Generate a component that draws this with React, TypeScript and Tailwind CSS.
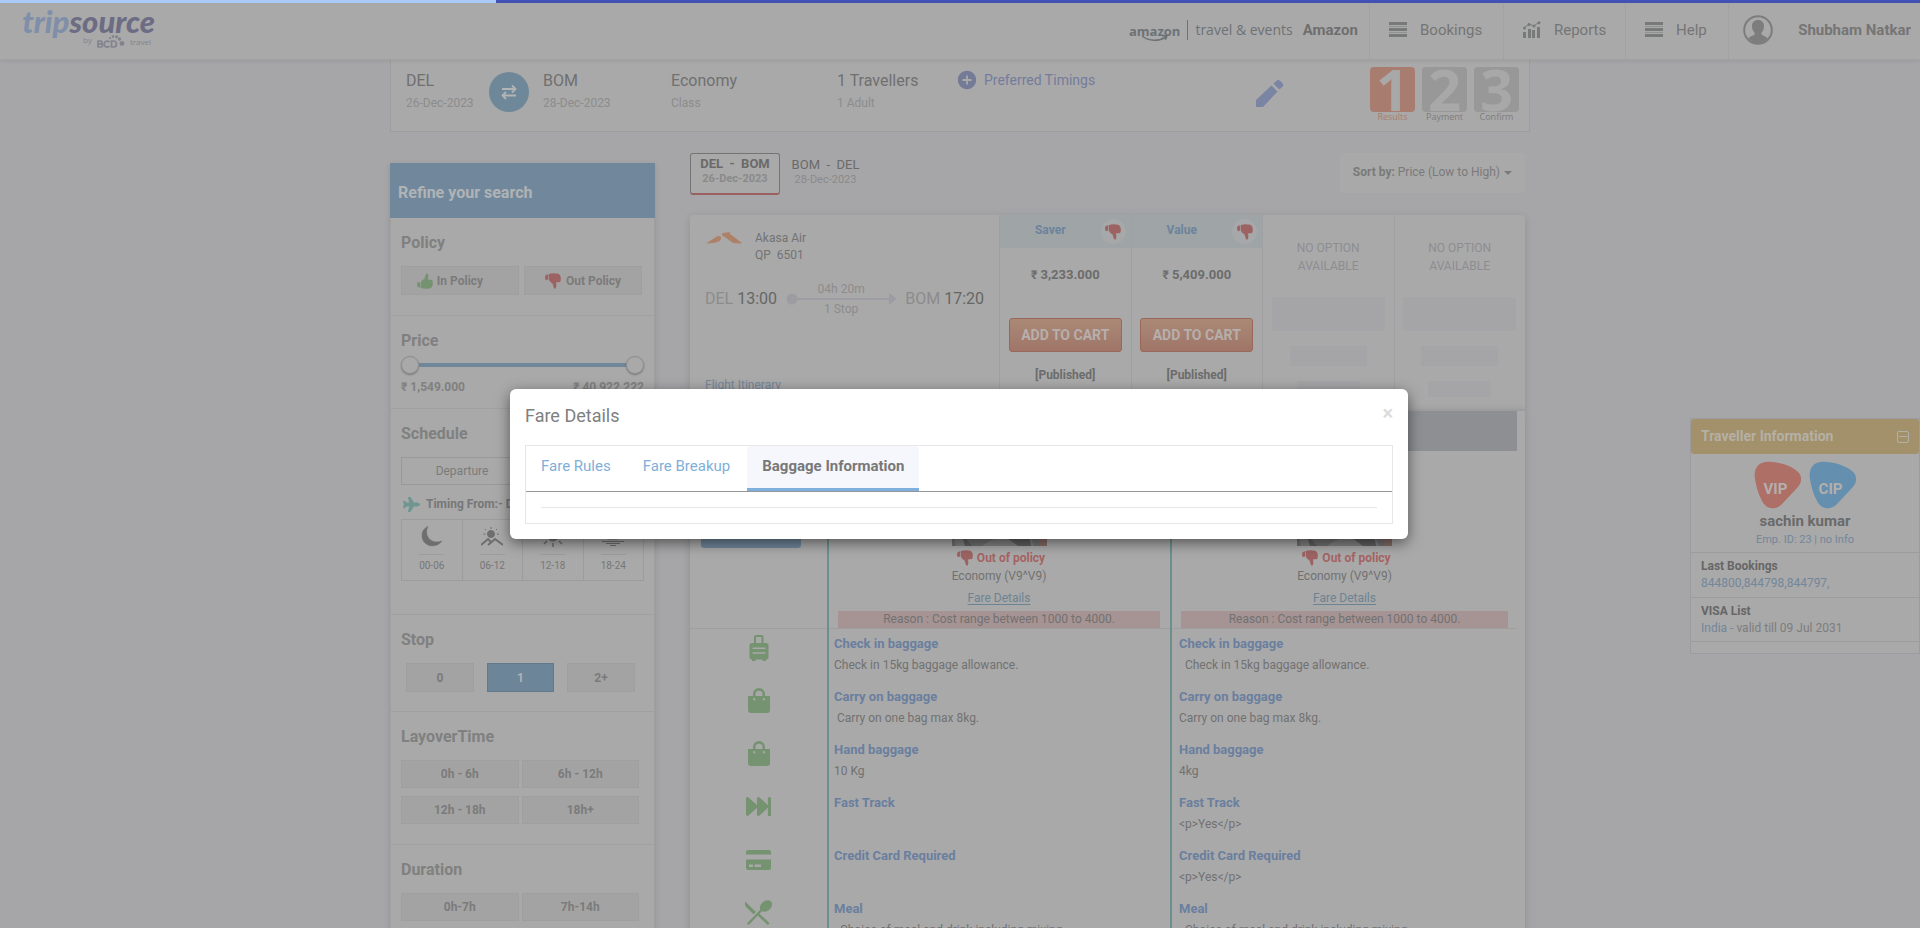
import React from "react";
import { FaPlane, FaFastForward } from "react-icons/fa";
import { MdAddCircle } from "react-icons/md";

const BUTTON_GREY = "flex items-center justify-center border border-[#9f9f9f] bg-[#a3a3a3] text-[12px] font-bold text-[#7b7b7b]";

function Thumb({ className }: { className: string }) {
  return (
    <svg width="16" height="16" viewBox="0 0 16 16" fill="currentColor" className={className} aria-hidden="true">
      <path d="M.2 2.800Q1.300 1.500 3.200 1.300L3 6.400.8 7.200Q-.3 5 .2 2.800z" />
      <path d="M3.800 1Q8.500-.4 13.200.8q2.200.6 2.500 3.400.4 3.600-.6 4.800l-4.200.6q.9 3.200 0 5.600-1.900.8-2.300-1.300L7.400 10.200Q4.800 9.200 3.700 6.600z" />
    </svg>
  );
}

function MenuBars() {
  return (
    <svg width="18" height="16" viewBox="0 0 18 16" fill="#777a79" aria-hidden="true">
      <rect width="18" height="3" />
      <rect y="6" width="18" height="3" />
      <rect y="12" width="18" height="3" />
      <rect y="4" width="18" height="1" opacity=".5" />
      <rect y="10" width="18" height="1" opacity=".5" />
    </svg>
  );
}

function ReportsIcon() {
  return (
    <svg width="18" height="18" viewBox="0 0 18 18" fill="#777a79" aria-hidden="true">
      <rect x="0" y="11" width="3" height="6" />
      <rect x="5" y="8" width="3" height="9" />
      <rect x="9" y="9" width="3" height="8" />
      <rect x="14" y="6" width="3" height="11" />
      <path d="M1 7 6 3l5 2 5-4" stroke="#777a79" fill="none" />
      <circle cx="1.500" cy="7" r="1.500" />
      <circle cx="6" cy="3.500" r="1.500" />
      <circle cx="11" cy="5" r="1.500" />
      <circle cx="16" cy="1.800" r="1.500" />
    </svg>
  );
}

function UserIcon() {
  return (
    <svg width="30" height="30" viewBox="0 0 30 30" aria-hidden="true">
      <circle cx="15" cy="15" r="13.800" fill="none" stroke="#7d7d7d" strokeWidth="2" />
      <path
        d="M15 5c3.800 0 6 2.500 6 6 0 2.500-.8 5-2.500 6.500v2.200c1.800 1.200 4.800 1.800 6.200 3.600A13.500 13.500 0 0 1 15 28.500a13.500 13.500 0 0 1-9.700-5.200c1.400-1.800 4.400-2.400 6.200-3.600v-2.200C9.800 16 9 13.500 9 11c0-3.500 2.200-6 6-6z"
        fill="#7d7d7d"
      />
    </svg>
  );
}

function Header() {
  const links = [
    { label: "Bookings", icon: <MenuBars />, width: "w-[134px]" },
    { label: "Reports", icon: <ReportsIcon />, width: "w-[122px]" },
    { label: "Help", icon: <MenuBars />, width: "w-[103px]" },
  ];
  return (
    <header className="relative z-10 flex h-[60px] shrink-0 flex-col border-b border-[#a2a2a2] bg-[#a9a9a9] shadow-[0_1px_4px_rgba(0,0,0,0.08)]">
      <div className="flex h-[3px] shrink-0 bg-[#4252b4]" role="progressbar" aria-label="Loading">
        <div className="w-[496px] bg-[#aacbf8]" />
      </div>
      <div className="flex flex-1 items-stretch pb-[2px]">
        <a href="#home" className="ml-[23px] flex w-[132px] flex-col items-end">
          <span className="font-['Lato'] text-[31px] leading-[36px] font-black italic">
            <span className="text-[#7f8fa9]">trip</span>
            <span className="text-[#6c6c84]">source</span>
          </span>
          <span className="-mt-1 mr-1 flex items-center gap-1 font-['Open_Sans'] text-[8px] leading-[14px] text-[#83838f]">
            <span className="-mt-1">by</span>
            <svg width="30" height="14" viewBox="0 0 28 14" fill="#83838f" aria-hidden="true">
              <path
                d="M1 6v6h3a1.600 1.600 0 0 0 0-3.200H1h2.600A1.400 1.400 0 0 0 3.600 6zM12.500 7.200A3 3 0 1 0 12.500 11M14.500 6v6h2a3 3 0 0 0 0-6z"
                fill="none"
                stroke="#83838f"
                strokeWidth="1.700"
              />
              <circle cx="13" cy="3" r="1.100" />
              <circle cx="16" cy="1.600" r="1.300" />
              <circle cx="19.500" cy="1.800" r="1.500" />
              <circle cx="22.500" cy="4" r="1.700" />
              <circle cx="25" cy="8.500" r="2.400" />
            </svg>
            <span>travel</span>
          </span>
        </a>
        <div className="ml-auto flex items-center gap-[10px] pr-[11px]">
          <div className="flex items-center gap-[7px] font-['Open_Sans'] text-[#6c7276]">
            <span className="flex flex-col items-center pt-1 text-[13px] leading-4 font-bold">
              amazon
              <svg width="28" height="7" viewBox="0 0 28 7" fill="none" stroke="#6c7276" strokeWidth="1.500" className="-mt-1" aria-hidden="true">
                <path d="M1 1c7 5.500 17 5.500 24 1M21 .8l5-.1-1.500 4" />
              </svg>
            </span>
            <span className="h-5 w-px bg-[#6c7276]" />
            <span className="text-[14px] leading-4">travel &amp; events</span>
          </div>
          <span className="text-[15px] font-bold text-[#6f6f6f]">Amazon</span>
        </div>
        <nav className="-mb-[2px] flex">
          {links.map((l) => (
            <a key={l.label} href="#menu" className={`flex items-center gap-[13px] border-l border-[#a2a2a2] pb-[2px] pl-[19px] text-[15px] text-[#757575] ${l.width}`}>
              {l.icon}
              {l.label}
            </a>
          ))}
          <a href="#user" className="flex w-[192px] items-center justify-between border-l border-[#a2a2a2] pr-[9px] pb-[2px] pl-[14px] text-[15px] font-bold text-[#757575]">
            <UserIcon />
            Shubham Natkar
          </a>
        </nav>
      </div>
    </header>
  );
}

function Leg({ title, sub, className }: { title: string; sub: string; className: string }) {
  return (
    <div className={className}>
      <div className="text-[16px] leading-[22px] text-[#707070]">{title}</div>
      <div className="text-[12px] leading-[22px] text-[#8c8c8c]">{sub}</div>
    </div>
  );
}

function SearchBar() {
  const steps = [
    { n: "1", label: "Results", box: "bg-[#a97c70]", text: "text-[#a97c70]" },
    { n: "2", label: "Payment", box: "bg-[#989898]", text: "text-[#7d7d7d]" },
    { n: "3", label: "Confirm", box: "bg-[#989898]", text: "text-[#7d7d7d]" },
  ];
  return (
    <section className="flex h-[72px] items-start border border-t-0 border-[#9c9c9e] bg-[#a9a9a9] pr-[10px] pl-[15px]">
      <Leg title="DEL" sub="26-Dec-2023" className="w-[83px] pt-[10px]" />
      <button aria-label="Swap" className="mt-3 mr-[14px] flex size-10 shrink-0 items-center justify-center rounded-full bg-[#6e889a]">
        <svg width="16" height="16" viewBox="0 0 16 16" fill="none" stroke="#b2b4b5" strokeWidth="1.800" aria-hidden="true">
          <path d="M1 5h13M11 1.500 14.500 5 11 8.500M15 11.500H2M5 8 1.500 11.500 5 15" />
        </svg>
      </button>
      <Leg title="BOM" sub="28-Dec-2023" className="w-32 pt-[10px]" />
      <Leg title="Economy" sub="Class" className="w-[166px] pt-[10px]" />
      <Leg title="1 Travellers" sub="1 Adult" className="w-[119px] pt-[10px]" />
      <button className="mt-[9px] flex items-center gap-[6px] text-[14px] leading-[22px] text-[#757b9c]">
        <MdAddCircle className="size-[22px] text-[#737b97]" />
        Preferred Timings
      </button>
      <button aria-label="Edit search" className="mt-5 ml-auto">
        <svg width="28" height="28" viewBox="0 0 28 28" fill="#7a84a3" aria-hidden="true">
          <path d="M0 20 15.500 5.500l6 6L7 27H0zM17.500 3.800 20.300 1q2-1.800 4 0l2 2q1.800 2 0 3.800L23.500 9.500z" />
        </svg>
      </button>
      <ol className="ml-[86px] flex gap-[7px] pt-[7px]">
        {steps.map((s) => (
          <li key={s.n} className="w-[45px] text-center">
            <div className={`h-[45px] rounded-sm font-['Open_Sans'] text-[58px] leading-[43px] font-bold text-[#a8a8a8] ${s.box}`}>{s.n}</div>
            <div className={`font-['Open_Sans'] text-[9px] leading-[10px] ${s.text}`}>{s.label}</div>
          </li>
        ))}
      </ol>
    </section>
  );
}

function FilterSection({ title, height, children }: { title: string; height: string; children: React.ReactNode }) {
  return (
    <section className={`border-b border-[#a0a0a0] px-[10px] pt-[13px] ${height}`}>
      <h3 className="mb-[11px] text-[16px] leading-6 font-bold text-[#808080]">{title}</h3>
      {children}
    </section>
  );
}

function ScheduleIcon({ kind }: { kind: number }) {
  return (
    <svg width="22" height="21" viewBox="0 0 22 21" fill="#6e6e6e" stroke="#6e6e6e" aria-hidden="true">
      {kind === 0 && <path d="M7 .5C2.500 9 9.500 19 21 15 15.500 23 1 21 1 9.500 1 5 3.500 2 7 .5z" strokeWidth=".5" />}
      {kind === 1 && (
        <>
          <circle cx="10" cy="8" r="3.500" />
          <path d="M10 1v2M4 3l1 1M16 3l-1 1M2.500 8h2M16 8h2" />
          <path d="M0 19l7-6 4 4M7 19l7-6 8 6" fill="none" strokeWidth="2" />
        </>
      )}
      {kind === 2 && (
        <>
          <circle cx="11" cy="10" r="5" />
          <path d="M11 17v4M5 15l-3 3M17 15l3 3M11 0v3M1 10h3M18 10h3" strokeWidth="1.500" />
        </>
      )}
      {kind === 3 && (
        <>
          <path d="M6 13a5 5 0 0 1 10 0z" />
          <path d="M0 15.500h22M4 17.500h14M8 19.500h6" />
        </>
      )}
    </svg>
  );
}

function Sidebar() {
  return (
    <aside className="mt-[31px] w-[265px] shrink-0 self-start shadow-[0_2px_6px_rgba(0,0,0,0.12)]">
      <h2 className="flex h-[55px] items-center bg-[#71889c] pt-1 pl-2 text-[16px] font-bold text-[#b0b3b6]">Refine your search</h2>
      <div className="border-x border-[#a0a0a0] bg-[#a9a9a9]">
        <FilterSection title="Policy" height="h-[98px]">
          <div className="flex gap-[5px]">
            <button className={`h-[29px] w-[118px] gap-1 pr-5 ${BUTTON_GREY}`}>
              <Thumb className="-scale-y-100 text-[#769371]" />
              In Policy
            </button>
            <button className={`h-[29px] w-[118px] gap-[5px] ${BUTTON_GREY}`}>
              <Thumb className="text-[#9d6363]" />
              Out Policy
            </button>
          </div>
        </FilterSection>
        <FilterSection title="Price" height="h-[93px]">
          <div className="-mt-[8px] flex h-[18px] items-center">
            <button aria-label="Minimum price" className="size-[18px] rounded-full border border-[#8f8f8f] bg-[#a9a9a9] shadow-[0_1px_2px_rgba(0,0,0,0.3)]" />
            <div className="h-1 w-[208px] bg-[#6f8799]" />
            <button aria-label="Maximum price" className="size-[18px] rounded-full border border-[#8f8f8f] bg-[#a9a9a9] shadow-[0_1px_2px_rgba(0,0,0,0.3)]" />
          </div>
          <div className="mt-1 flex justify-between text-[12px] leading-[18px] font-bold text-[#808080]">
            <span>₹ 1,549.000</span>
            <span>₹ 40,922.222</span>
          </div>
        </FilterSection>
        <FilterSection title="Schedule" height="h-[206px]">
          <div className="flex w-[242px] border border-[#999999] text-[12px] leading-[26px] text-[#7b7b7b]">
            <button className="w-1/2">Departure</button>
            <button className="w-1/2">Arrival</button>
          </div>
          <div className="mt-[9px] mb-[5px] flex h-5 items-center gap-[6px] pl-[2px] text-[12px] font-bold text-[#777777]">
            <FaPlane className="size-[17px] text-[#6f9690]" />
            Timing From:- DEL
          </div>
          <div className="grid w-[243px] grid-cols-4 border-y border-r border-[#9c9c9c]">
            {["00-06", "06-12", "12-18", "18-24"].map((t, i) => (
              <button key={t} className="flex h-[60px] flex-col items-center border-l border-[#9c9c9c] pt-[6px]">
                <ScheduleIcon kind={i} />
                <span className="mt-[7px] h-px w-[25px] bg-[#9c9c9c]" />
                <span className="mt-1 text-[10px] leading-[14px] text-[#777777]">{t}</span>
              </button>
            ))}
          </div>
        </FilterSection>
        <FilterSection title="Stop" height="h-[97px]">
          <div className="flex gap-[13px] pl-[5px]">
            <button className={`h-[29px] w-[68px] ${BUTTON_GREY}`}>0</button>
            <button className="h-[29px] w-[67px] border border-[#62788d] bg-[#6d8599] text-[12px] font-bold text-[#b0b3b6]">1</button>
            <button className={`h-[29px] w-[68px] ${BUTTON_GREY}`}>2+</button>
          </div>
        </FilterSection>
        <FilterSection title="LayoverTime" height="h-[133px]">
          <div className="grid w-[238px] grid-cols-2 gap-x-[3px] gap-y-2">
            {["0h - 6h", "6h - 12h", "12h - 18h", "18h+"].map((t) => (
              <button key={t} className={`h-[28px] ${BUTTON_GREY}`}>{t}</button>
            ))}
          </div>
        </FilterSection>
        <FilterSection title="Duration" height="h-[133px]">
          <div className="grid w-[238px] grid-cols-2 gap-x-[3px] gap-y-2">
            {["0h-7h", "7h-14h"].map((t) => (
              <button key={t} className={`h-[28px] ${BUTTON_GREY}`}>{t}</button>
            ))}
          </div>
        </FilterSection>
      </div>
    </aside>
  );
}

function FareColumn({ name, price }: { name: string; price: string }) {
  return (
    <div className="flex flex-col items-center border-l border-[#a0a0a2] text-[#6c6c6c]">
      <div className="flex h-[33px] w-full items-center justify-end bg-[#9fa4a7] pr-[5px]">
        <span className="flex-1 pr-5 pb-1 pl-5 text-center text-[12px] font-bold text-[#6c839c]">{name}</span>
        <span className="flex size-[25px] items-center justify-center rounded-full bg-[#a7a8a9]">
          <Thumb className="text-[#9d6363]" />
        </span>
      </div>
      <div className="mt-[18px] text-[13px] leading-[18px] font-bold">
        <span className="text-[12px]">₹</span> {price}
      </div>
      <button className="mt-[34px] h-[34px] w-[113px] rounded-[3px] border border-[#99685a] bg-linear-to-b from-[#ab8976] to-[#9f7568] text-[14px] font-bold text-[#b6afac]">
        ADD TO CART
      </button>
      <div className="mt-[14px] text-[12px] leading-[18px] font-bold">[Published]</div>
    </div>
  );
}

function EmptyColumn() {
  return (
    <div className="flex flex-col items-center border-l border-[#a0a0a2]">
      <div className="mt-6 text-center text-[12px] leading-[18px] text-[#8d8d91]">
        NO OPTION
        <br />
        AVAILABLE
      </div>
      <div className="mt-[22px] h-[34px] w-[113px] rounded-[3px] bg-[#a5a5a7]" />
      <div className="mt-[15px] h-5 w-[77px] bg-[#a5a5a7]" />
      <div className="mt-[15px] h-4 w-[63px] bg-[#a5a5a7]" />
    </div>
  );
}

function FlightCard() {
  return (
    <article className="grid grid-cols-[309px_repeat(4,minmax(0,1fr))] rounded-t-[4px] bg-[#a9a9a9] shadow-[0_2px_8px_rgba(0,0,0,0.12)]">
      <div className="flex h-[194px] flex-col px-[15px] pt-[15px]">
        <div className="flex gap-3 text-[12px] leading-[17px] text-[#737373]">
          <svg width="38" height="14" viewBox="0 0 38 14" fill="#ad8168" className="mt-[1px]" aria-hidden="true">
            <path d="M1 12.500 11 6q3-2 5 0 .5 3-2.500 4.500Q10 12 8 12zM16.500 3q2-2 9-1.800l-1 1.400 13 9.900-8-.3q-3-.5-5.500-3.200L17.500 4.500q-1-.8-1-1.500z" />
          </svg>
          <div>
            Akasa Air
            <br />
            <span className="whitespace-pre">QP  6501</span>
          </div>
        </div>
        <div className="mt-[18px] flex items-center text-[16px] leading-5 text-[#8c8c8c]">
          <span>DEL</span>
          <span className="ml-1 text-[#666666]">13:00</span>
          <div className="flex flex-1 flex-col items-center text-[12px] leading-[14px]">
            <span>04h 20m</span>
            <svg width="111" height="12" viewBox="0 0 111 12" fill="#9c9ca2" className="-my-[3px] shrink-0" aria-hidden="true">
              <circle cx="6" cy="6" r="5.500" />
              <rect x="6" y="5" width="98" height="2" />
              <path d="M103 0l8 6-8 6z" />
            </svg>
            <span>1 Stop</span>
          </div>
          <span>BOM</span>
          <span className="ml-1 text-[#666666]">17:20</span>
        </div>
        <a href="#itinerary" className="mt-auto mb-[15px] text-[12px] leading-[18px] text-[#758697]">
          Flight Itinerary
        </a>
      </div>
      <FareColumn name="Saver" price="3,233.000" />
      <FareColumn name="Value" price="5,409.000" />
      <EmptyColumn />
      <EmptyColumn />
    </article>
  );
}

function CabinPicture() {
  return (
    <svg width="95" height="60" viewBox="0 0 95 60" className="mx-auto" aria-hidden="true">
      <rect width="95" height="60" fill="#707070" />
      <path d="M0 45h9l4 15H4zM30 60q18-14 38-8l10 8zM77 48l5 12h-4z" fill="#818181" />
      <path d="M10 48l10 12h-7zM55 52l22-4 2 12H66z" fill="#5f5f5f" />
      <path d="M86 46h9v14h-7z" fill="#866c67" />
    </svg>
  );
}

function FareSummary() {
  return (
    <div className="pt-[35px] text-center text-[12px] leading-[18px] text-[#717171]">
      <CabinPicture />
      <div className="mt-[3px] flex items-center justify-center gap-1 pl-1 font-bold text-[#a56363]">
        <Thumb className="text-[#9d6363]" />
        Out of policy
      </div>
      <div>Economy (V9^V9)</div>
      <a href="#fare" className="my-1 inline-block text-[#6d8392] underline underline-offset-2">
        Fare Details
      </a>
      <div className="bg-[#a69494] leading-[17px]">Reason : Cost range between 1000 to 4000.</div>
    </div>
  );
}

function SuitcaseIcon() {
  return (
    <svg width="20" height="26" viewBox="0 0 20 26" fill="#769371" aria-hidden="true">
      <path
        fillRule="evenodd"
        d="M5 8V2q0-2 2-2h5.500q2 0 2 2v6h2.500q2.500 0 2.500 2.500V22q0 2.500-2.500 2.500V26h-3.500v-1.500h-7V26H3v-1.500Q.5 24.500.5 22V10.500Q.5 8 3 8zM7 8h5.500V2H7zM3.500 12.500v1.500h13v-1.500zm0 4.800v1.500h13v-1.500z"
      />
    </svg>
  );
}

function BagIcon() {
  return (
    <svg width="22" height="26" viewBox="0 0 22 26" fill="#769371" aria-hidden="true">
      <path
        fillRule="evenodd"
        d="M0 8h5V6a6 6 0 0 1 12 0v2h5v14q0 3-3 3H3q-3 0-3-3zM7.500 8h7V6.200a3.500 3.500 0 0 0-7 0zM5.200 10.200v2h2v-2zm9.600 0v2h2v-2z"
      />
    </svg>
  );
}

function CardIcon() {
  return (
    <svg width="25" height="20" viewBox="0 0 25 20" fill="#769371" aria-hidden="true">
      <path d="M2 0h21q2 0 2 2v2.500H0V2q0-2 2-2zM0 9.500h25V18q0 2-2 2H2q-2 0-2-2zm3 5V17h4v-2.500zm5.500 0V17h6.500v-2.500z" fillRule="evenodd" />
    </svg>
  );
}

function MealIcon() {
  return (
    <svg width="27" height="25" viewBox="0 0 27 25" fill="#769371" aria-hidden="true">
      <path d="M0 1.500 11 12l-2.500 2.300L2 8Q-1 4.500 0 1.500z" />
      <ellipse cx="21" cy="6" rx="6.800" ry="5" transform="rotate(-40 21 6)" />
      <path d="M17 9.500 3.500 23.500M13 14l10 9.500" stroke="#769371" strokeWidth="2.500" strokeLinecap="round" />
    </svg>
  );
}

const MEAL = "Choice of meal and drink including mixing";

const FEATURES = [
  { title: "Check in baggage", a: "Check in 15kg baggage allowance.", b: "  Check in 15kg baggage allowance.", icon: <SuitcaseIcon /> },
  { title: "Carry on baggage", a: " Carry on one bag max 8kg.", b: "Carry on one bag max 8kg.", icon: <BagIcon /> },
  { title: "Hand baggage", a: "10 Kg", b: "4kg", icon: <BagIcon /> },
  { title: "Fast Track", a: "", b: "<p>Yes</p>", icon: <FaFastForward className="size-[25px]" /> },
  { title: "Credit Card Required", a: "", b: "<p>Yes</p>", icon: <CardIcon /> },
  { title: "Meal", a: "  " + MEAL, b: "  " + MEAL, icon: <MealIcon /> },
];

function Feature({ title, text }: { title: string; text: string }) {
  return (
    <div className="pt-[6px] text-left leading-[18px]">
      <div className="text-[13px] font-bold text-[#6a7f9f]">{title}</div>
      <div className="mt-[3px] text-[12px] whitespace-pre text-[#717171]">{text}</div>
    </div>
  );
}

function FareTable() {
  return (
    <div className="border-t-2 border-[#9d9d9f] bg-[#a9a9a9] pr-2 shadow-[0_2px_8px_rgba(0,0,0,0.15)]">
      <div className="h-10 bg-[#8e8f93]" />
      <table className="w-full table-fixed border-collapse">
        <colgroup>
          <col className="w-[138px]" />
          <col className="w-[343px]" />
          <col />
        </colgroup>
        <tbody>
          <tr className="border-b border-[#9f9f9f] align-top">
            <td className="pt-[57px] pl-[11px]">
              <button aria-label="Compare fares" className="h-10 w-[100px] rounded-[3px] bg-[#6f8599]" />
            </td>
            <td className="border-l-2 border-[#6b908d] pr-[10px] pl-[9px]">
              <FareSummary />
            </td>
            <td className="border-l-2 border-[#6b908d] px-[9px]">
              <FareSummary />
            </td>
          </tr>
          {FEATURES.map((f) => (
            <tr key={f.title} className="h-[53px] align-top">
              <td className="text-[#769371]">
                <div className="flex h-[38px] items-center justify-center">{f.icon}</div>
              </td>
              <td className="border-l-2 border-[#6b908d] pl-[5px]">
                <Feature title={f.title} text={f.a} />
              </td>
              <td className="border-l-2 border-[#6b908d] pl-[7px]">
                <Feature title={f.title} text={f.b} />
              </td>
            </tr>
          ))}
        </tbody>
      </table>
    </div>
  );
}

function Results() {
  return (
    <main className="min-w-0 flex-1 pt-[21px]">
      <div className="mb-5 flex items-start justify-between">
        <div className="flex text-center">
          <button className="h-[42px] w-[90px] rounded-[3px] border border-b-2 border-[#747474] border-b-[#9b5f61] bg-[#a9a9a9] pb-1">
            <div className="text-[13px] leading-[15px] font-bold whitespace-pre text-[#6a6a6a]">DEL  -  BOM</div>
            <div className="text-[11px] leading-4 font-bold text-[#8a8a8a]">26-Dec-2023</div>
          </button>
          <button className="h-[42px] w-[91px] rounded-[3px] pb-1">
            <div className="text-[13px] leading-[15px] whitespace-pre text-[#6a6a6a]">BOM  -  DEL</div>
            <div className="text-[11px] leading-4 text-[#8a8a8a]">28-Dec-2023</div>
          </button>
        </div>
        <button className="flex h-10 items-center gap-1 rounded-[4px] bg-[#a9a9a9] px-[13px] pb-[2px] text-[12px] text-[#7a7a7a]">
          <span>
            <b>Sort by:</b> Price (Low to High)
          </span>
          <svg width="8" height="4" viewBox="0 0 8 4" fill="#7a7a7a" className="mt-[2px]" aria-hidden="true">
            <path d="M0 0h8L4 4z" />
          </svg>
        </button>
      </div>
      <FlightCard />
      <FareTable />
    </main>
  );
}

function Badge({ label, color }: { label: string; color: string }) {
  return (
    <div className="relative flex size-[48px] items-center justify-center">
      <svg viewBox="0 0 48 48" className={`absolute inset-0 size-full ${color}`} fill="currentColor" aria-hidden="true">
        <path d="M1 18C-1 6 6-1 18 1 30 2 38 6 43 10 49 15 48 22 43 27L28 43C21 50 12 48 8 40 4 32 2 25 1 18z" />
      </svg>
      <span className="relative pt-2 pr-1 text-[15px] font-bold text-[#b4afad]">{label}</span>
    </div>
  );
}

function TravellerPanel() {
  return (
    <aside className="absolute top-[418px] right-0 z-10 w-[230px] border border-[#9c9c9e] bg-[#a9a9a9] text-[12px] leading-[17px] text-[#7d7d7d]">
      <div className="flex h-[35px] items-center justify-between rounded-[3px] bg-[#a3916b] pr-[10px] pl-[10px] text-[14px] font-bold text-[#b5b0a6]">
        Traveller Information
        <button aria-label="Collapse">
          <svg width="12" height="12" viewBox="0 0 12 12" fill="none" stroke="#b5b0a6" aria-hidden="true">
            <rect x=".5" y=".5" width="11" height="11" rx="1.500" />
            <path d="M2 5.500h8" />
          </svg>
        </button>
      </div>
      <div className="border-b border-[#9c9c9e] pt-[7px] pb-1 text-center">
        <div className="flex justify-center gap-[7px]">
          <Badge label="VIP" color="text-[#ad6f66]" />
          <Badge label="CIP" color="text-[#658fae]" />
        </div>
        <div className="mt-[2px] text-[15px] leading-5 font-bold text-[#6a6a6a]">sachin kumar</div>
        <div className="text-[11px] text-[#73869a]">Emp. ID: 23 | no Info</div>
      </div>
      <div className="border-b border-[#9c9c9e] px-[10px] py-[5px]">
        <div className="font-bold text-[#666666]">Last Bookings</div>
        <div className="text-[#73869a]">844800,844798,844797,</div>
      </div>
      <div className="border-b border-[#9c9c9e] px-[10px] pt-[5px] pb-1">
        <div className="font-bold text-[#666666]">VISA List</div>
        <div>
          <span className="text-[#73869a]">India -</span> valid till 09 Jul 2031
        </div>
      </div>
      <div className="h-[11px]" />
    </aside>
  );
}

function FareModal() {
  return (
    <div className="absolute inset-0 z-20 flex items-center justify-center pr-[2px]">
      <div role="dialog" aria-label="Fare Details" className="w-[898px] max-w-full rounded-md bg-white px-[15px] pb-[15px] shadow-[0_4px_14px_rgba(0,0,0,0.5)]">
        <div className="flex h-14 items-start justify-between pt-4">
          <h2 className="text-[18px] leading-[22px] text-[#7f7f7f]">Fare Details</h2>
          <button aria-label="Close" className="text-[20px] leading-[16px] font-bold text-[#dcdcdc]">
            ×
          </button>
        </div>
        <div className="border border-[#e7e7e9]">
          <div role="tablist" className="flex h-[46px] border-b border-[#959799] text-[15px]">
            <button role="tab" className="px-[15px] pb-1 text-[#7fafd9]">Fare Rules</button>
            <button role="tab" className="px-[17px] pb-1 text-[#7fafd9]">Fare Breakup</button>
            <button role="tab" aria-selected="true" className="rounded-t-[4px] border-b-[3px] border-[#7fafdc] bg-[#f6f7fc] px-[15px] pb-[2px] font-bold text-[#787878]">
              Baggage Information
            </button>
          </div>
          <div className="p-[15px]">
            <hr className="border-[#e7e7e9]" />
          </div>
        </div>
      </div>
    </div>
  );
}

export default function App() {
  return (
    <div className="relative h-screen overflow-hidden bg-[#a6a6a8] font-['Roboto',sans-serif]">
      <Header />
      <div className="mx-auto w-[1140px] max-w-full">
        <SearchBar />
        <div className="flex items-start gap-[35px] pr-[5px]">
          <Sidebar />
          <Results />
        </div>
      </div>
      <TravellerPanel />
      <FareModal />
    </div>
  );
}
